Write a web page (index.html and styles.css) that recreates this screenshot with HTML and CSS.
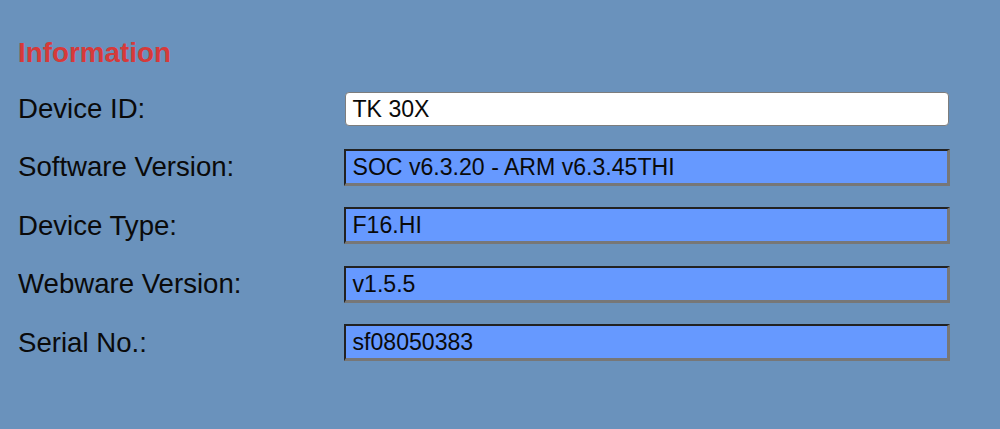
FILE: index.html
```html
<!DOCTYPE html>
<html>
<head>
<meta charset="utf-8">
<link rel="stylesheet" href="styles.css">
</head>
<body>
<div class="panel">
  <h1 class="title">Information</h1>
  <div class="grid">
    <div class="label">Device ID:</div>
    <div class="cell"><div class="field field-edit">TK 30X</div></div>
    <div class="label">Software Version:</div>
    <div class="cell"><div class="field field-ro">SOC v6.3.20 - ARM v6.3.45THI</div></div>
    <div class="label">Device Type:</div>
    <div class="cell"><div class="field field-ro">F16.HI</div></div>
    <div class="label">Webware Version:</div>
    <div class="cell"><div class="field field-ro">v1.5.5</div></div>
    <div class="label">Serial No.:</div>
    <div class="cell"><div class="field field-ro">sf08050383</div></div>
  </div>
</div>
</body>
</html>
```
FILE: styles.css
```css
html, body {
  margin: 0;
  padding: 0;
  background: #6a92bc;
  height: 100%;
}
body {
  font-family: "Liberation Sans", Arial, sans-serif;
  color: #000;
}
.panel {
  padding: 37px 0 0 18px;
}
.title {
  margin: 0;
  font-size: 27.8px;
  line-height: 32px;
  font-weight: bold;
  color: #d63a3a;
}
.grid {
  display: grid;
  grid-template-columns: 326px 606px;
  grid-auto-rows: 58.5px;
  align-items: center;
  margin-top: 10.5px;
}
.label {
  font-size: 27.6px;
  line-height: 32px;
  white-space: nowrap;
  color: #0a0a0a;
}
.cell {
  display: flex;
  align-items: center;
}
.field {
  box-sizing: border-box;
  font-size: 23.1px;
  line-height: 26px;
  white-space: nowrap;
  display: flex;
  align-items: center;
  color: #0a0a0a;
}
.field-edit {
  margin-left: 1px;
  width: 604px;
  height: 34px;
  background: #fff;
  border: 1px solid #7d7d7d;
  border-radius: 4px;
  padding-left: 6.5px;
}
.field-ro {
  width: 606px;
  height: 37px;
  background: #6699ff;
  border-style: solid;
  border-width: 2px 3px 3px 2px;
  border-color: #222 #777 #777 #222;
  padding-left: 6.5px;
}
```
